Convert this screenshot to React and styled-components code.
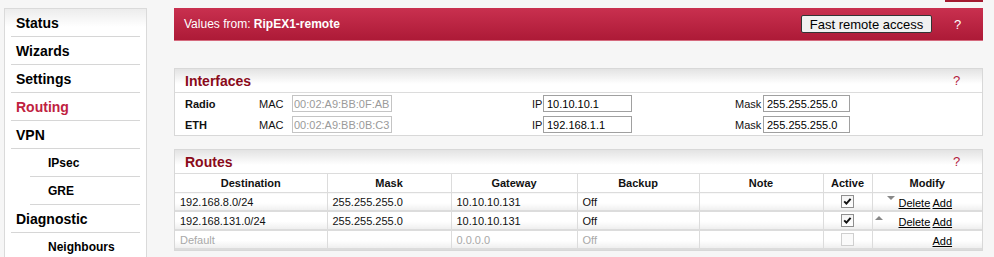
import React from 'react';
import styled, { createGlobalStyle } from 'styled-components';

const GlobalStyle = createGlobalStyle`
	body {
		margin: 0;
		background: #f6f6f6;
		font-family: "Liberation Sans", Arial, sans-serif;
		color: #111;
	}
`;

const Page = styled.div`
	display: flex;
	align-items: flex-start;
	gap: 27px;
	padding-left: 4px;
	height: 257px;
	overflow: hidden;
`;

const Sidebar = styled.nav`
	box-sizing: border-box;
	width: 143px;
	margin-top: 8px;
	min-height: 260px;
	background: linear-gradient(to bottom, #ececec 0, #fff 18px);
	border: 1px solid #dadada;
`;

const NavItem = styled.div`
	height: 27px;
	line-height: 28px;
	margin: 0 6px 0 ${(p) => (p.$sub ? '25px' : '6px')};
	padding-left: ${(p) => (p.$sub ? '18px' : '5px')};
	border-bottom: 1px solid #d6d6d6;
	font-weight: bold;
	font-size: ${(p) => (p.$sub ? '12px' : '14px')};
	color: ${(p) => (p.$active ? '#c0213f' : '#000')};
	white-space: nowrap;
`;

const Main = styled.main`
	width: 809px;
	display: flex;
	flex-direction: column;
`;

const TopMark = styled.div`
	align-self: flex-end;
	width: 38px;
	height: 2px;
	background: #a41a30;
	margin-bottom: 6px;
`;

const Banner = styled.div`
	height: 32px;
	display: flex;
	align-items: center;
	padding-left: 10px;
	background: linear-gradient(to bottom, #c9304f 0%, #ad1a37 100%);
	border-bottom: 1px solid #d56a7e;
	color: #fff;
	font-size: 12px;
`;

const Strong = styled.b`
	font-weight: bold;
`;

const RemoteButton = styled.button`
	margin-left: auto;
	box-sizing: border-box;
	width: 131px;
	height: 18px;
	padding: 0;
	background: #f0f0f0;
	border: 1px solid #333;
	border-radius: 2px;
	font-family: "Liberation Sans", Arial, sans-serif;
	font-size: 13px;
	color: #000;
`;

const Help = styled.span`
	width: 51px;
	text-align: center;
	font-size: 13px;
	color: ${(p) => (p.$light ? '#fff' : '#b3203c')};
`;

const Panel = styled.section`
	background: #fff;
	border: 1px solid #d8d8d8;
	margin-top: ${(p) => p.$top}px;
`;

const PanelHead = styled.div`
	height: 23px;
	display: flex;
	align-items: center;
	padding-left: 10px;
	background: linear-gradient(to bottom, #e3e3e3 0%, #fff 65%);
	border-bottom: 1px solid #dcdcdc;
`;

const PanelTitle = styled.h2`
	margin: 0;
	flex: 1;
	font-size: 14px;
	font-weight: bold;
	color: #8a0a1a;
`;

const IfRow = styled.div`
	display: grid;
	grid-template-columns: 74px 33px 240px 11px 192px 28px auto;
	align-items: center;
	height: 21px;
	padding-left: 10px;
	font-size: 11px;
`;

const IfName = styled.span`
	font-weight: bold;
`;

const IfLabel = styled.span`
	color: #111;
`;

const Field = styled.input`
	box-sizing: border-box;
	width: ${(p) => p.$w}px;
	height: 17px;
	padding: 0 ${(p) => (p.disabled ? '1px' : '3px')};
	border: 1px solid ${(p) => (p.disabled ? '#c4c4c4' : '#a0a0a0')};
	background: #fff;
	font-family: "Liberation Sans", Arial, sans-serif;
	font-size: 11px;
	color: ${(p) => (p.disabled ? '#9a9a9a' : '#000')};
`;

const Table = styled.table`
	width: 807px;
	border-collapse: collapse;
	table-layout: fixed;
	font-size: 11px;
`;

const Col = styled.col`
	width: ${(p) => p.$w}px;
`;

const Th = styled.th`
	height: 18px;
	padding: 0;
	font-weight: bold;
	text-align: center;
	background: #fff;
	border: 1px solid #dcdcdc;
	border-top: none;
	&:first-child { border-left: none; }
	&:last-child { border-right: none; }
`;

const Td = styled.td`
	height: 17px;
	padding: 0 5px;
	text-align: ${(p) => (p.$center ? 'center' : 'left')};
	color: ${(p) => (p.$muted ? '#a8a8a8' : '#111')};
	background: linear-gradient(to bottom, #fff 0%, #fff 55%, #efefef 100%);
	border: 1px solid #dcdcdc;
	border-bottom-width: 2px;
	&:first-child { border-left: none; }
	&:last-child { border-right: none; padding: 0; }
`;

const CheckBox = styled.span`
	display: inline-block;
	box-sizing: border-box;
	width: 13px;
	height: 13px;
	vertical-align: middle;
	border: 1px solid ${(p) => (p.$disabled ? '#cfcfcf' : '#8f8f8f')};
	background: ${(p) => (p.$disabled ? '#fafafa' : 'linear-gradient(#f4f4f4, #fff)')};
	svg { display: block; }
`;

const ModifyCell = styled.div`
	display: grid;
	grid-template-columns: 12px 12px 34px 20px;
	align-items: center;
	margin-left: 2px;
`;

const Arrow = styled.span`
	width: 0;
	height: 0;
	border-left: 4px solid transparent;
	border-right: 4px solid transparent;
	${(p) => (p.$up ? 'border-bottom: 4px solid #888;' : 'border-top: 4px solid #888;')}
	align-self: start;
	margin-top: ${(p) => (p.$up ? '2px' : '1px')};
`;

const Action = styled.a`
	color: #000;
	text-decoration: underline;
	cursor: pointer;
	padding-top: 2px;
`;

const Check = () => (
	<svg width="11" height="11" viewBox="0 0 11 11">
		<path d="M2.2 5.4 L4.4 7.6 L8.6 2.8" fill="none" stroke="#111" strokeWidth="2" />
	</svg>
);

const nav = [
	{ label: 'Status' },
	{ label: 'Wizards' },
	{ label: 'Settings' },
	{ label: 'Routing', active: true },
	{ label: 'VPN' },
	{ label: 'IPsec', sub: true },
	{ label: 'GRE', sub: true },
	{ label: 'Diagnostic' },
	{ label: 'Neighbours', sub: true },
];

const interfaces = [
	{ name: 'Radio', mac: '00:02:A9:BB:0F:AB', ip: '10.10.10.1', mask: '255.255.255.0' },
	{ name: 'ETH', mac: '00:02:A9:BB:0B:C3', ip: '192.168.1.1', mask: '255.255.255.0' },
];

const columns = [
	['Destination', 152],
	['Mask', 124],
	['Gateway', 126],
	['Backup', 122],
	['Note', 124],
	['Active', 49],
	['Modify', 110],
];

const routes = [
	{ dest: '192.168.8.0/24', mask: '255.255.255.0', gw: '10.10.10.131', backup: 'Off', active: true, down: true, del: true },
	{ dest: '192.168.131.0/24', mask: '255.255.255.0', gw: '10.10.10.131', backup: 'Off', active: true, up: true, del: true },
	{ dest: 'Default', mask: '', gw: '0.0.0.0', backup: 'Off', muted: true },
];

export default function App() {
	return (
		<>
			<GlobalStyle />
			<Page>
				<Sidebar>
					{nav.map((n) => (
						<NavItem key={n.label} $sub={n.sub} $active={n.active}>
							{n.label}
						</NavItem>
					))}
				</Sidebar>
				<Main>
					<TopMark />
					<Banner>
						<span>
							Values from: <Strong>RipEX1-remote</Strong>
						</span>
						<RemoteButton>Fast remote access</RemoteButton>
						<Help $light>?</Help>
					</Banner>

					<Panel $top={27}>
						<PanelHead>
							<PanelTitle>Interfaces</PanelTitle>
							<Help>?</Help>
						</PanelHead>
						{interfaces.map((i) => (
							<IfRow key={i.name}>
								<IfName>{i.name}</IfName>
								<IfLabel>MAC</IfLabel>
								<Field $w={100} disabled value={i.mac} readOnly />
								<IfLabel>IP</IfLabel>
								<Field $w={89} value={i.ip} readOnly />
								<IfLabel>Mask</IfLabel>
								<Field $w={87} value={i.mask} readOnly />
							</IfRow>
						))}
					</Panel>

					<Panel $top={13}>
						<PanelHead>
							<PanelTitle>Routes</PanelTitle>
							<Help>?</Help>
						</PanelHead>
						<Table>
							<colgroup>
								{columns.map(([c, w]) => (
									<Col key={c} $w={w} />
								))}
							</colgroup>
							<thead>
								<tr>
									{columns.map(([c]) => (
										<Th key={c}>{c}</Th>
									))}
								</tr>
							</thead>
							<tbody>
								{routes.map((r) => (
									<tr key={r.dest}>
										<Td $muted={r.muted}>{r.dest}</Td>
										<Td>{r.mask}</Td>
										<Td $muted={r.muted}>{r.gw}</Td>
										<Td $muted={r.muted}>{r.backup}</Td>
										<Td />
										<Td $center>
											<CheckBox $disabled={r.muted}>{r.active && <Check />}</CheckBox>
										</Td>
										<Td>
											<ModifyCell>
												{r.up ? <Arrow $up /> : <span />}
												{r.down ? <Arrow /> : <span />}
												{r.del ? <Action>Delete</Action> : <span />}
												<Action>Add</Action>
											</ModifyCell>
										</Td>
									</tr>
								))}
							</tbody>
						</Table>
					</Panel>
				</Main>
			</Page>
		</>
	);
}
